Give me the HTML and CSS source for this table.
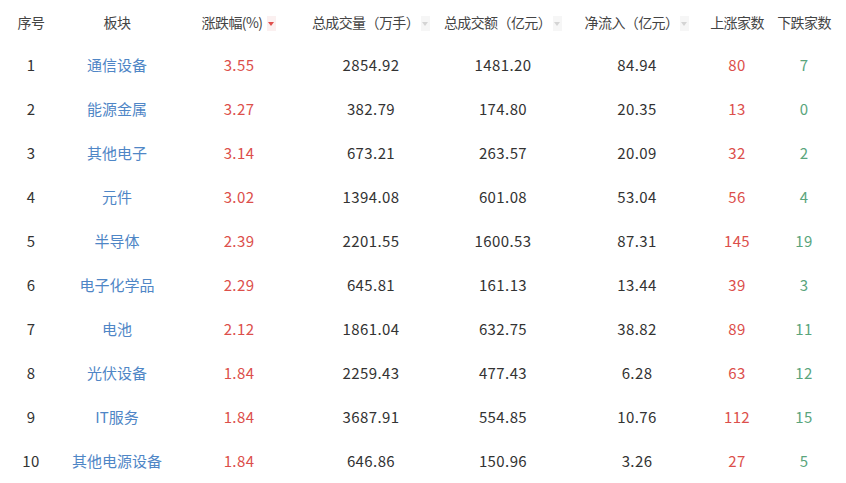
FILE: index.html
```html
<!DOCTYPE html>
<html lang="zh">
<head>
<meta charset="utf-8">
<link rel="stylesheet" href="styles.css">
</head>
<body>
<table class="board">
  <colgroup>
    <col class="c1"><col class="c2"><col class="c3"><col class="c4"><col class="c5"><col class="c6"><col class="c7"><col class="c8">
  </colgroup>
  <thead>
    <tr>
      <th>序号</th>
      <th>板块</th>
      <th>涨跌幅(%)<span class="sort active"></span></th>
      <th>总成交量（万手）<span class="sort"></span></th>
      <th>总成交额（亿元）<span class="sort"></span></th>
      <th>净流入（亿元）<span class="sort"></span></th>
      <th>上涨家数</th>
      <th>下跌家数</th>
    </tr>
  </thead>
  <tbody>
    <tr><td>1</td><td class="name">通信设备</td><td class="up">3.55</td><td>2854.92</td><td>1481.20</td><td>84.94</td><td class="up">80</td><td class="down">7</td></tr>
    <tr><td>2</td><td class="name">能源金属</td><td class="up">3.27</td><td>382.79</td><td>174.80</td><td>20.35</td><td class="up">13</td><td class="down">0</td></tr>
    <tr><td>3</td><td class="name">其他电子</td><td class="up">3.14</td><td>673.21</td><td>263.57</td><td>20.09</td><td class="up">32</td><td class="down">2</td></tr>
    <tr><td>4</td><td class="name">元件</td><td class="up">3.02</td><td>1394.08</td><td>601.08</td><td>53.04</td><td class="up">56</td><td class="down">4</td></tr>
    <tr><td>5</td><td class="name">半导体</td><td class="up">2.39</td><td>2201.55</td><td>1600.53</td><td>87.31</td><td class="up">145</td><td class="down">19</td></tr>
    <tr><td>6</td><td class="name">电子化学品</td><td class="up">2.29</td><td>645.81</td><td>161.13</td><td>13.44</td><td class="up">39</td><td class="down">3</td></tr>
    <tr><td>7</td><td class="name">电池</td><td class="up">2.12</td><td>1861.04</td><td>632.75</td><td>38.82</td><td class="up">89</td><td class="down">11</td></tr>
    <tr><td>8</td><td class="name">光伏设备</td><td class="up">1.84</td><td>2259.43</td><td>477.43</td><td>6.28</td><td class="up">63</td><td class="down">12</td></tr>
    <tr><td>9</td><td class="name">IT服务</td><td class="up">1.84</td><td>3687.91</td><td>554.85</td><td>10.76</td><td class="up">112</td><td class="down">15</td></tr>
    <tr><td>10</td><td class="name">其他电源设备</td><td class="up">1.84</td><td>646.86</td><td>150.96</td><td>3.26</td><td class="up">27</td><td class="down">5</td></tr>
  </tbody>
</table>
</body>
</html>
```
FILE: styles.css
```css
html, body {
  margin: 0;
  padding: 0;
  background: #fff;
}
body {
  font-family: "Microsoft YaHei", "Noto Sans CJK SC", "Noto Sans", sans-serif;
  color: #333;
}
.board {
  border-collapse: collapse;
  table-layout: fixed;
  width: 838px;
}
.c1 { width: 62px; }
.c2 { width: 110px; }
.c3 { width: 134px; }
.c4 { width: 130px; }
.c5 { width: 134px; }
.c6 { width: 134px; }
.c7 { width: 66px; }
.c8 { width: 68px; }

.board th {
  height: 43px;
  padding: 0;
  font-size: 14px;
  letter-spacing: -0.6px;
  font-weight: normal;
  color: #444;
  text-align: center;
  white-space: nowrap;
  vertical-align: middle;
}
.board td {
  height: 42px;
  padding: 0 0 2px;
  font-size: 15px;
  letter-spacing: 0.4px;
  text-align: center;
  vertical-align: middle;
  white-space: nowrap;
  color: #333;
}
.board td.name { color: #4f86c6; letter-spacing: 0; }
.board td.up { color: #dc4f4b; }
.board td.down { color: #5aa57c; }

.sort {
  display: inline-block;
  position: relative;
  width: 9px;
  height: 15px;
  margin-left: 2px;
  vertical-align: -3px;
  background: #f6f6f6;
}
.sort::after {
  content: "";
  position: absolute;
  left: 1px;
  top: 6px;
  border-left: 3.5px solid transparent;
  border-right: 3.5px solid transparent;
  border-top: 4px solid #d4d4d4;
}
.sort.active {
  margin-left: 5px;
  background: #fbf0f0;
}
.sort.active::after { border-top-color: #e0504d; }
```
